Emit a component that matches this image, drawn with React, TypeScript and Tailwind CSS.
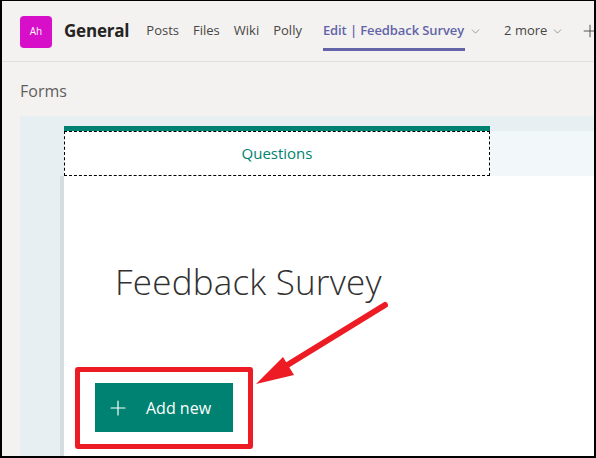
import React from 'react';
import { ChevronDown, Plus } from 'lucide-react';

const tabs = ['Posts', 'Files', 'Wiki', 'Polly'];

export default function App() {
  return (
    <div
      className="w-[596px] h-[458px] overflow-hidden border-l-2 border-r-2 border-t border-b-2 border-black bg-[#f3f2f1] flex flex-col"
      style={{ fontFamily: '"Open Sans", "Noto Sans", sans-serif' }}
    >
      {/* top bar */}
      <div className="h-[61px] shrink-0 flex items-center pl-[18px] border-b border-[#e1dfdd] whitespace-nowrap overflow-hidden">
        <div className="w-[32px] h-[32px] shrink-0 rounded bg-[#d70fc9] flex items-center justify-center text-white text-[10px] mt-[1px]">
          Ah
        </div>
        <div className="ml-[12px] shrink-0 text-[17px] font-bold text-[#252423] tracking-[-0.2px]">General</div>
        <div className="flex shrink-0 items-center ml-[17px] text-[13px] text-[#484644] gap-[14px]">
          {tabs.map((t) => (
            <span key={t}>{t}</span>
          ))}
          <span className="relative flex items-center gap-[5px] text-[#6264a7] font-semibold ml-[7px] tracking-[-0.1px]">
            Edit | Feedback Survey
            <ChevronDown className="w-[13px] h-[13px] text-[#8a8886]" strokeWidth={1.5} />
            <span className="absolute left-0 right-[17px] top-[27px] h-[3px] bg-[#6264a7]" />
          </span>
          <span className="flex items-center gap-[4px] ml-[8px]">
            2 more
            <ChevronDown className="w-[13px] h-[13px] text-[#8a8886]" strokeWidth={1.5} />
          </span>
          <Plus className="w-[20px] h-[20px] shrink-0 text-[#484644] ml-[2px]" strokeWidth={1.1} />
        </div>
      </div>

      {/* Forms heading */}
      <div className="h-[54px] shrink-0 pl-[18px] pt-[17px] text-[16px] text-[#605e5c]">Forms</div>

      {/* content */}
      <div className="flex-1 ml-[18px] bg-[#e8eff2] flex relative">
        <div className="w-[40px] shrink-0" />
        <div className="w-[4px] shrink-0 mt-[60px] bg-[#d4dde1]" />
        <div className="flex-1 flex flex-col pt-[10px]">
          <div className="flex h-[50px]">
            <div className="w-[426px] flex flex-col">
              <div className="h-[5px] bg-[#008272]" />
              <div className="flex-1 bg-white border border-dashed border-black flex items-center justify-center text-[15px] text-[#008272]">
                Questions
              </div>
            </div>
            <div className="flex-1 bg-[#f2f8f9] mt-[5px]" />
          </div>
          <div className="flex-1 bg-white relative">
            <div
              className="pl-[51px] pt-[80px] text-[35px] text-[#323130] tracking-[0.2px]"
              style={{ fontWeight: 300 }}
            >
              Feedback Survey
            </div>
            <div className="ml-[11px] mt-[58px] w-[178px] h-[82px] border-[5px] border-[#ed1c24] rounded-[3px] flex items-center justify-center">
              <div className="w-[138px] h-[49px] bg-[#008272] flex items-center pl-[11px] gap-[16px] text-white text-[16px]">
                <Plus className="w-[24px] h-[24px]" strokeWidth={1.2} />
                Add new
              </div>
            </div>
          </div>
        </div>
        {/* arrow */}
        <svg className="absolute left-0 top-0" width="576" height="340" viewBox="0 0 576 340">
          <line x1="365" y1="189" x2="256" y2="256" stroke="#ed1c24" strokeWidth="6" strokeLinecap="round" />
          <polygon points="236,268 263,241 274,259" fill="#ed1c24" />
        </svg>
      </div>
    </div>
  );
}
